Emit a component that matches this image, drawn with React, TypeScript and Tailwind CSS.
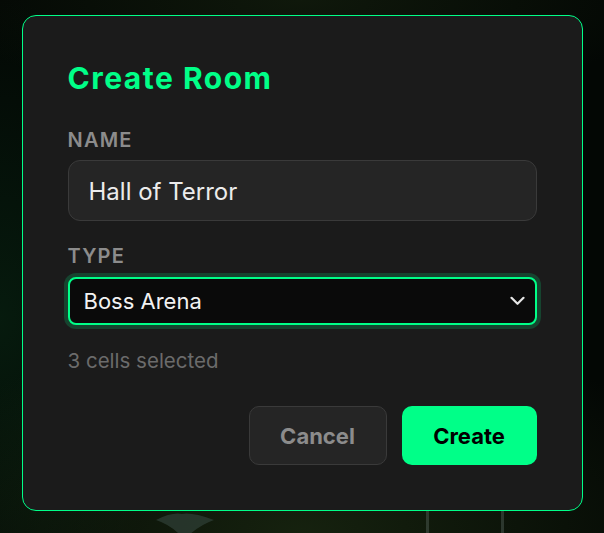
import React from "react";

export default function App() {
  return (
    <div
      className="relative min-h-screen w-full overflow-hidden flex justify-center items-start pt-[15px] bg-[#030704] bg-[radial-gradient(ellipse_70%_40%_at_50%_100%,rgba(40,60,25,0.5),transparent),radial-gradient(ellipse_30%_60%_at_0%_60%,rgba(10,50,25,0.45),transparent),radial-gradient(ellipse_60%_20%_at_50%_0%,rgba(30,45,20,0.45),transparent)]"
      style={{ fontFamily: "Inter, 'Liberation Sans', sans-serif" }}
    >
      {/* background decorations */}
      <svg className="absolute left-[152px] top-[510px]" width="70" height="30" viewBox="0 0 70 30">
        <path d="M4 10 Q20 2 30 4 Q40 2 62 10 Q45 16 32 30 Q22 16 4 10 Z" fill="#2a3a30" opacity="0.85" />
      </svg>
      <div className="absolute left-[426px] top-[510px] w-[3px] h-[30px] bg-[#4b5a52] opacity-50" />
      <div className="absolute left-[501px] top-[510px] w-[3px] h-[30px] bg-[#4b5a52] opacity-50" />

      <div className="relative w-[561px] rounded-[14px] border border-[#00ff88] bg-[#1b1b1b] px-[45px] pt-[44px] pb-[45px]">
        <h2 className="text-[30px] leading-[36px] font-bold tracking-[0.05em] text-[#00ff88]">
          Create Room
        </h2>

        <div className="mt-[30px] text-[20px] leading-[28px] font-semibold tracking-[0.06em] text-[#8c8c8c]">
          NAME
        </div>
        <div className="mt-[6px] h-[61px] flex items-center rounded-[12px] border border-[#3a3a3a] bg-[#252525] px-[20px] text-[24px] text-[#ececec]">
          <span className="mt-[2px]">Hall of Terror</span>
        </div>

        <div className="mt-[21px] text-[20px] leading-[28px] font-semibold tracking-[0.06em] text-[#8c8c8c]">
          TYPE
        </div>
        <div className="mt-[7px] h-[48px] flex items-center justify-between rounded-[8px] border-2 border-[#00ff88] bg-[#0a0a0a] pl-[14px] pr-[10px] text-[22px] text-[#f2f2f2] shadow-[0_0_0_4px_rgba(0,255,136,0.18)]">
          <span className="mt-[1px]">Boss Arena</span>
          <svg width="15" height="10" viewBox="0 0 15 10" fill="none">
            <path d="M1.5 1.8 L7.5 7.8 L13.5 1.8" stroke="#e6e6e6" strokeWidth="2.2" strokeLinecap="round" strokeLinejoin="round" />
          </svg>
        </div>

        <div className="mt-[22px] text-[20.5px] leading-[28px] text-[#6b6b6b]">
          3 cells selected
        </div>

        <div className="mt-[31px] flex justify-end gap-[15px]">
          <button className="h-[59px] w-[138px] rounded-[10px] border border-[#3a3a3a] bg-[#252525] pt-[2px] text-[22px] font-bold text-[#8c8c8c]">
            Cancel
          </button>
          <button className="h-[59px] w-[135px] rounded-[10px] bg-[#00ff88] pt-[2px] text-[22px] font-bold text-black">
            Create
          </button>
        </div>
      </div>
    </div>
  );
}
